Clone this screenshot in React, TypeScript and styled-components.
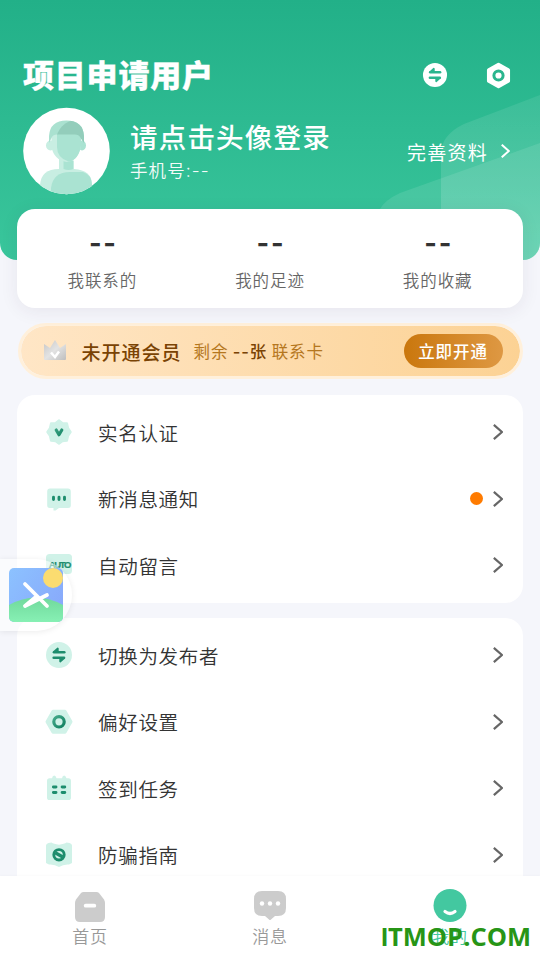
import React from 'react';
import styled, { createGlobalStyle } from 'styled-components';

const GlobalStyle = createGlobalStyle`
  * { box-sizing: border-box; }
  html, body { margin: 0; padding: 0; }
  body {
    background: #f5f6fb;
    font-family: 'Noto Sans CJK SC', sans-serif;
    overflow: hidden;
  }
  svg { display: block; flex: none; }
`;

const Screen = styled.div`
  position: relative;
  width: 540px;
  height: 960px;
  display: flex;
  flex-direction: column;
  overflow: hidden;
  background: #f5f6fb;
`;

const Content = styled.main`
  flex: 1;
  min-height: 0;
  overflow: hidden;
`;

const Hero = styled.header`
  position: relative;
  height: 260px;
  padding: 52px 30px 0 23px;
  border-radius: 0 0 17px 17px;
  overflow: hidden;
  background: linear-gradient(180deg, #22b088 0%, #3ac69c 100%);
  color: #fff;
`;

const HeroWaves = styled.svg`
  position: absolute;
  right: 0;
  bottom: 0;
`;

const TitleRow = styled.div`
  position: relative;
  display: flex;
  align-items: center;
  justify-content: space-between;
  height: 46px;
`;

const Title = styled.h1`
  margin: -3px 0 0;
  font-size: 31px;
  line-height: 46px;
  font-weight: 900;
  letter-spacing: 0.8px;
  -webkit-text-stroke: 0.3px #fff;
`;

const HeroActions = styled.div`
  display: flex;
  align-items: center;
  gap: 38px;
  margin-right: -1px;
`;

const Profile = styled.div`
  position: relative;
  display: flex;
  align-items: center;
  height: 88px;
  margin-top: 9px;
`;

const Identity = styled.div`
  flex: 1;
  margin-left: 20px;
`;

const Name = styled.div`
  font-size: 27.5px;
  line-height: 38px;
  font-weight: 500;
  letter-spacing: 1.2px;
`;

const Phone = styled.div`
  font-family: Inter, 'Noto Sans CJK SC', sans-serif;
  font-size: 17.5px;
  line-height: 31px;
  letter-spacing: 1.1px;
  font-weight: 350;
  opacity: 0.95;
`;

const Complete = styled.div`
  display: flex;
  align-items: center;
  gap: 13px;
  font-size: 19px;
  line-height: 28px;
  letter-spacing: 1.2px;

  span { padding-top: 2px; }
`;

const StatsCard = styled.section`
  position: relative;
  display: grid;
  grid-template-columns: repeat(3, 1fr);
  height: 99px;
  margin: -51px 17px 0;
  padding: 0 1.5px;
  border-radius: 18px;
  background: #fff;
  box-shadow: 0 3px 18px rgba(60, 40, 80, 0.08);
`;

const Stat = styled.div`
  display: flex;
  flex-direction: column;
  align-items: center;
  padding-top: 14px;
`;

const StatValue = styled.div`
  height: 41px;
  font-family: Inter, sans-serif;
  font-size: 27px;
  line-height: 41px;
  font-weight: 700;
  letter-spacing: 1.8px;
  padding-left: 2px;
  color: #333;
`;

const StatLabel = styled.div`
  font-size: 16.5px;
  line-height: 32px;
  font-weight: 350;
  letter-spacing: 0.9px;
  color: #666;
`;

const MemberBar = styled.section`
  display: flex;
  align-items: center;
  height: 56px;
  margin: 15px 17px 0 18px;
  padding: 0 17.5px 0 22px;
  border: 3px solid #fff0db;
  border-radius: 28px;
  background: linear-gradient(90deg, #ffe6c6, #fcd294) padding-box;
`;

const MemberTitle = styled.span`
  margin: 2px 0 0 14.5px;
  font-size: 19px;
  line-height: 28px;
  font-weight: 500;
  letter-spacing: 1px;
  color: #7a4304;
`;

const MemberNote = styled.span`
  flex: 1;
  margin: 2px 0 0 12px;
  font-family: Inter, 'Noto Sans CJK SC', sans-serif;
  font-size: 16.5px;
  line-height: 28px;
  letter-spacing: 0.9px;
  word-spacing: -1.1px;
  color: #b5771e;
`;

const Count = styled.b`
  font-weight: 500;
  color: #7a4304;
`;

const OpenButton = styled.button`
  width: 99px;
  height: 34px;
  padding: 0;
  border: 0;
  border-radius: 17px;
  background: linear-gradient(90deg, #ca770d, #de9843);
  color: #fff;
  font: 500 16.5px/35px 'Noto Sans CJK SC', sans-serif;
  letter-spacing: 0.9px;
`;

const MenuCard = styled.section`
  margin: ${(p) => p.$gap}px 17px 0;
  padding: 4px 0 4.5px;
  border-radius: 18px;
  background: #fff;
`;

const MenuRow = styled.div`
  display: flex;
  align-items: center;
  height: 66.5px;
  padding: 0 20px 0 28px;
`;

const MenuLabel = styled.span`
  flex: 1;
  margin: 1px 0 0 25px;
  font-size: 19.5px;
  line-height: 30px;
  font-weight: 350;
  letter-spacing: 0.7px;
  color: #333;
`;

const Dot = styled.i`
  width: 13px;
  height: 13px;
  margin-right: 10px;
  border-radius: 50%;
  background: #ff7b00;
`;

const TabBar = styled.nav`
  display: grid;
  grid-template-columns: repeat(3, 1fr);
  height: 84px;
  background: #fff;
  box-shadow: 0 -1px 2px rgba(0, 0, 0, 0.02);
`;

const Tab = styled.div`
  display: flex;
  flex-direction: column;
  align-items: center;
  padding-top: 12px;
  font-size: 17px;
  line-height: 25px;
  font-weight: 350;
  letter-spacing: 0.8px;
  color: ${(p) => (p.$active ? '#42c79f' : '#999')};
`;

const TabIcon = styled.div`
  display: flex;
  align-items: center;
  height: 35px;
`;

const Floating = styled.aside`
  position: absolute;
  left: 0;
  top: 559px;
  display: flex;
  align-items: center;
  width: 72px;
  height: 72px;
  padding-left: 9px;
  border-radius: 0 36px 36px 0;
  background: rgba(255, 255, 255, 0.5);
  box-shadow: 0 1px 6px rgba(0, 0, 0, 0.08);
`;

const Watermark = styled.div`
  position: absolute;
  right: 9px;
  bottom: 6px;
  font: 700 25.5px/34px 'Open Sans', sans-serif;
  white-space: nowrap;
  color: #279516;
`;

const PlainInitial = styled.span`
  font-family: 'Liberation Sans', sans-serif;
`;

const Chevron = ({ size, color, stroke }) => (
  <svg width={size * 0.65} height={size} viewBox="0 0 9.75 15" fill="none" stroke={color} strokeWidth={stroke}>
    <path d="M.8 .8 8.4 7.5.8 14.2" />
  </svg>
);

const SwapMark = ({ color }) => (
  <g fill={color} stroke={color} strokeLinejoin="round" strokeLinecap="round">
    <path d="M8.500 10.700H18.800" strokeWidth="2.600" />
    <path d="M8.300 10.500 12.300 7V10.500Z" strokeWidth="1.800" />
    <path d="M8.200 16.300H18.500" strokeWidth="2.600" />
    <path d="M18.700 16.500 14.700 20V16.500Z" strokeWidth="1.800" />
  </g>
);

const Avatar = () => (
  <svg width="87" height="88" viewBox="0 0 87 88">
    <defs>
      <clipPath id="face"><circle cx="43.5" cy="44" r="43.3" /></clipPath>
      <clipPath id="hair"><path d="M26 36V29Q27 13.5 43.5 13.5T61 29V36L57 30Q56 27.5 52 27.5H34Q30 27.5 29 30Z" /></clipPath>
    </defs>
    <circle cx="43.5" cy="44" r="43.3" fill="#fff" />
    <g clipPath="url(#face)">
      <path d="M17 88V78Q18 62 36 62H51Q69 63 69 78V88Z" fill="#c8eee2" />
      <path d="M28 88V81Q30 65 47 65H60Q69 68 69 78V88Z" fill="#aae3d2" />
      <path d="M36 50H50.500V62Q43.500 67 36 62Z" fill="#c8eee2" />
      <path d="M40.500 54H50.500V62Q45.500 64 40.500 62Z" fill="#aae3d2" />
    </g>
    <ellipse cx="27.500" cy="38.500" rx="4.500" ry="5" fill="#c8eee2" />
    <ellipse cx="59" cy="38.500" rx="4" ry="5" fill="#aae3d2" />
    <path d="M28.500 26H58V39Q55 54 43.500 55Q31 53 28.500 40Z" fill="#c8eee2" />
    <path d="M34 26H58V39Q55 54 45.500 54.500Q34 51 34 40Z" fill="#aae3d2" />
    <g clipPath="url(#hair)">
      <rect x="25" y="12" width="38" height="25" fill="#aae1d0" />
      <circle cx="54" cy="34" r="21" fill="#93cdbb" />
    </g>
  </svg>
);

const IconFrame = ({ children }) => (
  <svg width="28" height="28" viewBox="-.5 -.5 28 28">
    <defs>
      <linearGradient id="ink" x1="7" y1="7" x2="20" y2="20" gradientUnits="userSpaceOnUse">
        <stop stopColor="#4bae8f" />
        <stop offset="1" stopColor="#087b5a" />
      </linearGradient>
    </defs>
    {children}
  </svg>
);

const mint = '#d0f2e8';
const ink = '#1d8d6d';

const icons = {
  verify: (
    <IconFrame>
      <path d="M13.500 2 16.900 4.600 21.400 5 22.400 9.600 25 13.500 22.400 17.400 21.400 22 16.900 22.500 13.500 25 10.100 22.500 5.600 22 4.600 17.400 2 13.500 4.600 9.600 5.600 5 10.100 4.600Z" fill={mint} stroke={mint} strokeWidth="2.400" strokeLinejoin="round" />
      <path d="M10.700 11.500 13.500 16.200 16.300 11.500" fill="none" stroke="url(#ink)" strokeWidth="3.200" strokeLinecap="round" strokeLinejoin="round" />
    </IconFrame>
  ),
  message: (
    <IconFrame>
      <path d="M4.500 3H22.500Q25.300 3 25.300 6V20Q25.300 22.500 22.500 22.500H13.500L10 25H8V22.500H4.500Q1.700 22.500 1.700 20V6Q1.700 3 4.500 3Z" fill={mint} />
      <path d="M8 11.800V14M13.500 11.800V14M19 11.800V14" stroke={ink} strokeWidth="2.900" strokeLinecap="round" />
    </IconFrame>
  ),
  auto: (
    <IconFrame>
      <rect x=".5" y="2.500" width="26" height="20" rx="3.500" fill={mint} />
      <text x="13.900" y="16.500" textAnchor="middle" fontFamily="Liberation Sans" fontWeight="700" fontSize="9.500" letterSpacing="-1.300" fill={ink} stroke={ink} strokeWidth=".2">AUTO</text>
    </IconFrame>
  ),
  swap: (
    <IconFrame>
      <circle cx="13.500" cy="13.500" r="13" fill={mint} />
      <SwapMark color={ink} />
    </IconFrame>
  ),
  settings: (
    <IconFrame>
      <path d="M7.500 2.800H19.500L25.500 13.300 19.500 23.800H7.500L1.500 13.300Z" fill={mint} stroke={mint} strokeWidth="3" strokeLinejoin="round" />
      <circle cx="13.500" cy="13.300" r="5.200" fill="none" stroke="url(#ink)" strokeWidth="3.200" />
    </IconFrame>
  ),
  calendar: (
    <IconFrame>
      <path d="M1.500 6.500Q1.500 3.800 4 3.800H6.500Q7 1 8.700 1T11 3.800H16.500Q17 1 18.600 1T21 3.800H23Q25.500 3.800 25.500 6.500V23Q25.500 25.600 23 25.600H4Q1.500 25.600 1.500 23Z" fill={mint} />
      <path d="M7.900 12.500H10.500M16.600 12.500H19.300M7.900 18H10.500M16.600 18H19.300" stroke={ink} strokeWidth="2.900" strokeLinecap="round" />
    </IconFrame>
  ),
  shield: (
    <IconFrame>
      <path d="M.5 4Q.5 2 3 1.500L6 1Q8 2.500 13.500 3.300Q19 2.500 21 1L24 1.500Q26.500 2 26.500 4V21.500L23.500 23Q18 22.500 13.500 25.500Q9 22.500 3.500 23L.5 21.500Z" fill={mint} />
      <circle cx="13.500" cy="13.300" r="5.200" fill="none" stroke={ink} strokeWidth="2.900" />
      <path d="M9.800 11.200 17.200 15.400" stroke={ink} strokeWidth="3.400" />
    </IconFrame>
  ),
};

const Row = ({ icon, label, dot }) => (
  <MenuRow>
    {icons[icon]}
    <MenuLabel>{label}</MenuLabel>
    {dot && <Dot />}
    <Chevron size={16} color="#666" stroke={2.1} />
  </MenuRow>
);

export default function App() {
  return (
    <>
      <GlobalStyle />
      <Screen>
        <Content>
          <Hero>
            <HeroWaves width="160" height="166" viewBox="0 0 160 166">
              <defs>
                <linearGradient id="wave" x1="0" y1="0" x2="0" y2="1">
                  <stop stopColor="#fff" stopOpacity=".08" />
                  <stop offset="1" stopColor="#fff" stopOpacity=".18" />
                </linearGradient>
              </defs>
              <path d="M61 166V60Q61 41 84 30L160 1V166Z" fill="url(#wave)" />
              <path d="M0 115Q5 106 20 99L160 49V166H0Z" fill="#fff" fillOpacity=".1" />
            </HeroWaves>
            <TitleRow>
              <Title>项目申请用户</Title>
              <HeroActions>
                <svg width="26" height="26" viewBox="0 0 27 27">
                  <circle cx="13.500" cy="13.500" r="12.500" fill="#fff" />
                  <SwapMark color="#2ab58e" />
                </svg>
                <svg width="25" height="27" viewBox="0 0 25 27">
                  <path d="M12.500 2.500 22.300 8V19L12.500 24.500 2.700 19V8Z" fill="#fff" stroke="#fff" strokeWidth="3.500" strokeLinejoin="round" />
                  <circle cx="12.500" cy="13.500" r="4.600" fill="none" stroke="#2ab58e" strokeWidth="3" />
                </svg>
              </HeroActions>
            </TitleRow>
            <Profile>
              <Avatar />
              <Identity>
                <Name>请点击头像登录</Name>
                <Phone>手机号:--</Phone>
              </Identity>
              <Complete>
                <span>完善资料</span>
                <Chevron size={14} color="#fff" stroke={2.2} />
              </Complete>
            </Profile>
          </Hero>
          <StatsCard>
            {['我联系的', '我的足迹', '我的收藏'].map((label) => (
              <Stat key={label}>
                <StatValue>--</StatValue>
                <StatLabel>{label}</StatLabel>
              </Stat>
            ))}
          </StatsCard>
          <MemberBar>
            <svg width="24" height="22" viewBox="0 0 24 22">
              <defs>
                <linearGradient id="crown" x1="0" y1="0" x2="1" y2="1">
                  <stop stopColor="#c5c5c5" />
                  <stop offset=".5" stopColor="#e3e3e3" />
                  <stop offset="1" stopColor="#bebebe" />
                </linearGradient>
              </defs>
              <path d="M1 4 7 8 12 0 17 8 23 4V19Q23 20 22 20H2Q1 20 1 19Z" fill="url(#crown)" />
              <path d="M8 12.500 12 17 16 11.500" stroke="#fff" strokeWidth="2.500" fill="none" />
            </svg>
            <MemberTitle>未开通会员</MemberTitle>
            <MemberNote>剩余 <Count>--张</Count> 联系卡</MemberNote>
            <OpenButton>立即开通</OpenButton>
          </MemberBar>
          <MenuCard $gap={16}>
            <Row icon="verify" label="实名认证" />
            <Row icon="message" label="新消息通知" dot />
            <Row icon="auto" label="自动留言" />
          </MenuCard>
          <MenuCard $gap={15}>
            <Row icon="swap" label="切换为发布者" />
            <Row icon="settings" label="偏好设置" />
            <Row icon="calendar" label="签到任务" />
            <Row icon="shield" label="防骗指南" />
          </MenuCard>
        </Content>
        <TabBar>
          <Tab>
            <TabIcon>
              <svg width="30" height="32" viewBox="0 0 30 32">
                <path d="M6 3Q7 2 8.500 2H21.500Q23 2 24 3L29 9.500Q30 11 30 13V27Q30 32 25 32H5Q0 32 0 27V13Q0 11 1 9.500Z" fill="#ccc" />
                <path d="M10.700 15.700H19.300" stroke="#fff" strokeWidth="3.800" strokeLinecap="round" />
              </svg>
            </TabIcon>
            首页
          </Tab>
          <Tab>
            <TabIcon>
              <svg width="32" height="31" viewBox="0 0 32 31">
                <path d="M8 1H24Q32 1 32 9V18Q32 26 24 26H21L17 29.500Q16 30.500 15 29.500L11 26H8Q0 26 0 18V9Q0 1 8 1Z" fill="#ccc" />
                <g fill="#fff"><circle cx="8" cy="13.500" r="2.200" /><circle cx="16" cy="13.500" r="2.200" /><circle cx="24" cy="13.500" r="2.200" /></g>
              </svg>
            </TabIcon>
            消息
          </Tab>
          <Tab $active>
            <TabIcon>
              <svg width="34" height="34" viewBox="0 0 34 34">
                <circle cx="17" cy="16.500" r="16.500" fill="#43c8a0" />
                <path d="M12 22.500Q17 26.500 22 22.500" fill="none" stroke="#fff" strokeWidth="3.200" strokeLinecap="round" />
              </svg>
            </TabIcon>
            我的
          </Tab>
        </TabBar>
        <Floating>
          <svg width="54" height="54" viewBox="0 0 54 54">
            <defs>
              <linearGradient id="sky" x1="0" y1="0" x2="1" y2=".7">
                <stop stopColor="#8cc2ff" /><stop offset="1" stopColor="#88a9fb" />
              </linearGradient>
              <linearGradient id="hill" x1="0" y1="0" x2="0" y2="1">
                <stop stopColor="#70d99c" /><stop offset="1" stopColor="#87f0b4" />
              </linearGradient>
              <clipPath id="tile"><rect width="54" height="54" rx="5" /></clipPath>
            </defs>
            <g clipPath="url(#tile)">
              <rect width="54" height="54" fill="url(#sky)" />
              <path d="M0 37Q27 22 54 37V54H0Z" fill="url(#hill)" />
              <circle cx="44" cy="10" r="10" fill="#fbdc70" />
            </g>
            <path d="M16 16 38 38M16 38 28 28M16 38 38 27" stroke="#fff" strokeWidth="3.800" strokeLinecap="round" />
          </svg>
        </Floating>
        <Watermark><PlainInitial>I</PlainInitial>TMOP.COM</Watermark>
      </Screen>
    </>
  );
}
